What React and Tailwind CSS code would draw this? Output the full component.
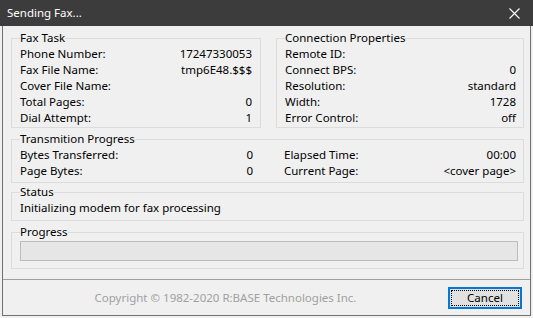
import React from 'react';

const FONT = { fontFamily: '"Noto Sans", "Open Sans", sans-serif' };

function Row({ label, value }) {
  return (
    <div className="flex justify-between h-[16px] leading-[16px]">
      <span>{label}</span>
      <span>{value}</span>
    </div>
  );
}

function Group({ title, className = '', children }) {
  return (
    <fieldset className={`border border-[#dcdcdc] px-[8px] pt-0 ${className}`}>
      <legend className="px-0 ml-0 h-[16px] leading-[16px]">{title}</legend>
      {children}
    </fieldset>
  );
}

export default function App() {
  return (
    <div className="w-[533px] h-[318px] bg-[#f0f0f0] text-[11.5px] text-black flex flex-col overflow-hidden" style={FONT}>
      {/* title bar */}
      <div className="h-[26px] bg-[#3c3c3c] text-white flex items-center justify-between pl-[7px] pr-[13px] shrink-0">
        <span className="text-[11.5px]">Sending Fax...</span>
        <svg width="11" height="11" viewBox="0 0 11 11">
          <path d="M0.5 0.5 L10.5 10.5 M10.5 0.5 L0.5 10.5" stroke="#ffffff" strokeWidth="1.1" />
        </svg>
      </div>

      {/* dialog body */}
      <div className="mx-[2px] h-[290px] border-x border-b border-[#707070] bg-[#f0f0f0] flex flex-col">
        <div className="pl-[8px] pr-[6px] pt-[4px] flex flex-col">
          <div className="flex gap-[15px]">
            <Group title="Fax Task" className="w-[250px] pb-[1px]">
              <Row label="Phone Number:" value="17247330053" />
              <Row label="Fax File Name:" value="tmp6E48.$$$" />
              <Row label="Cover File Name:" value="" />
              <Row label="Total Pages:" value="0" />
              <Row label="Dial Attempt:" value="1" />
            </Group>
            <Group title="Connection Properties" className="flex-1 pb-[1px] pr-[7px]">
              <Row label="Remote ID:" value="" />
              <Row label="Connect BPS:" value="0" />
              <Row label="Resolution:" value="standard" />
              <Row label="Width:" value="1728" />
              <Row label="Error Control:" value="off" />
            </Group>
          </div>

          <Group title="Transmition Progress" className="mt-[3px] pb-[3px] pr-[7px]">
            <div className="flex">
              <div className="w-[233px]">
                <Row label="Bytes Transferred:" value="0" />
                <Row label="Page Bytes:" value="0" />
              </div>
              <div className="flex-1 ml-[31px]">
                <Row label="Elapsed Time:" value="00:00" />
                <Row label="Current Page:" value="<cover page>" />
              </div>
            </div>
          </Group>

          <Group title="Status" className="mt-[1px] pb-[4px]">
            <div className="h-[16px] leading-[16px]">Initializing modem for fax processing</div>
          </Group>

          <Group title="Progress" className="mt-[3px] pb-[7px] pr-[5px]">
            <div className="mt-[1px] h-[20px] border border-[#bcbcbc] bg-[#e6e6e6]"></div>
          </Group>
        </div>

        <div className="mt-auto border-t border-[#a0a0a0] h-[36px] flex items-center">
          <div className="flex-1 text-center text-[#a0a0a0]">Copyright © 1982-2020 R:BASE Technologies Inc.</div>
          <button className="mr-[8px] w-[74px] h-[22px] border-2 border-[#0078d7] bg-[#e1e1e1] p-[1px]">
            <div className="w-full h-full border border-dotted border-black flex items-center justify-center leading-none">
              Cancel
            </div>
          </button>
        </div>
      </div>
    </div>
  );
}
